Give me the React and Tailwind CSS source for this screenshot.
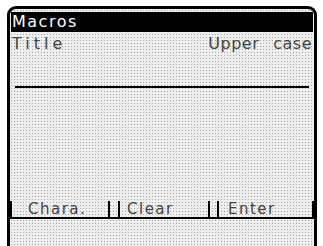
export default function App() {
  const dots =
    "bg-[radial-gradient(circle,#a8a8a8_0.7px,transparent_1px)] bg-[length:3px_3px] bg-[#eeeeee]";
  return (
    <div className="w-[323px] h-[246px] bg-white overflow-hidden relative" style={{ fontFamily: '"DejaVu Sans", sans-serif' }}>
      <div className={`ml-[7px] mt-[6px] w-[310px] h-[240px] border-x-[3px] border-t-[3px] border-black rounded-t-[9px] flex flex-col ${dots}`}>
        <div className="mx-[1px] mt-[3px] h-[20px] bg-black text-white text-[16px] font-medium leading-[20px] pl-[1px] tracking-[1.5px]">
          Macros
        </div>
        <div className="flex justify-between px-[2px] mt-[3px] text-[16px] font-medium leading-[18px] text-[#444]">
          <span className="tracking-[4px]">Title</span>
          <span className="flex gap-[14px] tracking-[0.5px]">
            <span>Upper</span>
            <span>case</span>
          </span>
        </div>
        <div className="mx-[5px] mt-[33px] h-[2px] bg-black" />
        <div className="flex-1" />
        <div className="flex items-end text-[15px] font-medium leading-[16px] text-[#444] tracking-[1.5px] h-[18px]">
          <span className="w-[2px] h-[16px] bg-black" />
          <span className="ml-[16px] w-[80px]">Chara.</span>
          <span className="w-[2px] h-[16px] bg-black" />
          <span className="ml-[8px] w-[2px] h-[16px] bg-black" />
          <span className="ml-[7px] w-[81px]">Clear</span>
          <span className="w-[2px] h-[16px] bg-black" />
          <span className="ml-[7px] w-[2px] h-[16px] bg-black" />
          <span className="ml-[9px] w-[84px]">Enter</span>
          <span className="w-[2px] h-[16px] bg-black" />
        </div>
        <div className="h-[2px] bg-black -mx-[3px]" />
        <div className="h-[27px]" />
      </div>
    </div>
  );
}
